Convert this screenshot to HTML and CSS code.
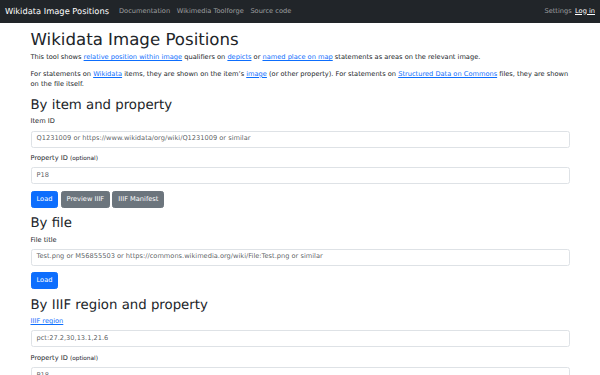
FILE: index.html
```html
<!DOCTYPE html>
<html lang="en">
<head>
    <meta charset="UTF-8">
    <meta name="viewport" content="width=device-width, initial-scale=1.0">
    <title>Wikidata Image Positions</title>
    <link rel="stylesheet" href="styles.css">
</head>
<body>
<!-- 顶部导航 -->
<nav class="navbar">
    <div class="navbar-left">
        <a class="brand" href="#">Wikidata Image Positions</a>
        <a class="nav-link" href="#">Documentation</a>
        <a class="nav-link" href="#">Wikimedia Toolforge</a>
        <a class="nav-link" href="#">Source code</a>
    </div>
    <div class="navbar-right">
        <a class="nav-link" href="#">Settings</a>
        <span class="navbar-text"><a href="#">Log in</a></span>
    </div>
</nav>

<main class="container">
    <h1>Wikidata Image Positions</h1>
    <p>
        This tool shows <a href="#">relative position within image</a> qualifiers on <a href="#">depicts</a> or <a href="#">named place on map</a> statements as areas on the relevant image.
    </p>
    <p>
        For statements on <a href="#">Wikidata</a> items, they are shown on the item’s <a href="#">image</a> (or other property). For statements on <a href="#">Structured Data on Commons</a> files, they are shown<br>
        on the file itself.
    </p>

    <!-- 按条目和属性 -->
    <form class="section">
        <h2>By item and property</h2>
        <div class="form-group">
            <label for="item-id" class="form-label">Item ID</label>
            <input type="text" id="item-id" class="form-control" placeholder="Q1231009 or https://www.wikidata/org/wiki/Q1231009 or similar">
        </div>
        <div class="form-group">
            <label for="property-id" class="form-label">Property ID <small>(optional)</small></label>
            <input type="text" id="property-id" class="form-control" placeholder="P18">
        </div>
        <div class="form-group">
            <button type="button" class="btn btn-primary">Load</button>
            <button type="button" class="btn btn-secondary">Preview IIIF</button>
            <button type="button" class="btn btn-secondary">IIIF Manifest</button>
        </div>
    </form>

    <!-- 按文件 -->
    <form class="section">
        <h2>By file</h2>
        <div class="form-group">
            <label for="file-title" class="form-label">File title</label>
            <input type="text" id="file-title" class="form-control" placeholder="Test.png or M56855503 or https://commons.wikimedia.org/wiki/File:Test.png or similar">
        </div>
        <div class="form-group">
            <button type="button" class="btn btn-primary">Load</button>
        </div>
    </form>

    <!-- 按 IIIF 区域和属性 -->
    <form class="section">
        <h2>By IIIF region and property</h2>
        <div class="form-group">
            <label for="iiif-region" class="form-label"><a href="#">IIIF region</a></label>
            <input type="text" id="iiif-region" class="form-control" placeholder="pct:27.2,30,13.1,21.6">
        </div>
        <div class="form-group">
            <label for="iiif-property-id" class="form-label">Property ID <small>(optional)</small></label>
            <input type="text" id="iiif-property-id" class="form-control" placeholder="P18">
        </div>
        <div class="form-group">
            <button type="button" class="btn btn-primary">Load</button>
        </div>
    </form>
</main>
</body>
</html>
```

FILE: styles.css
```css
*, *::before, *::after {
    box-sizing: border-box;
}
html {
    font-size: 6.65px;
    scrollbar-width: none;
}
::-webkit-scrollbar {
    display: none;
}
body {
    font-family: "DejaVu Sans", sans-serif;
    font-size: 1rem;
    line-height: 1.5;
    color: #212529;
    background-color: #fff;
    margin: 0;
    text-rendering: geometricPrecision;
}
a {
    color: #0d6efd;
}
.navbar {
    display: flex;
    justify-content: space-between;
    align-items: center;
    background-color: #212529;
    padding: 0.5rem 0.75rem;
}
.navbar-left, .navbar-right {
    display: flex;
    align-items: center;
}
.brand {
    color: #fff;
    font-size: 1.25rem;
    padding: 0.3125rem 0;
    margin-right: 1rem;
    text-decoration: none;
}
.nav-link {
    color: rgba(255, 255, 255, 0.55);
    padding: 0.5rem;
    text-decoration: none;
}
.navbar-text a {
    color: #fff;
}
.container {
    max-width: 549px;
    margin: 1rem auto 0;
    padding: 0 5px;
}
h1, h2 {
    font-weight: 400;
    line-height: 1.2;
    margin: 0 0 0.5rem;
}
h1 {
    font-size: 2.5rem;
}
h2 {
    font-size: 2rem;
    margin-top: 1.25rem;
}
p {
    margin: 0 0 1rem;
}
.form-group {
    margin-bottom: 1rem;
}
.form-label {
    display: inline-block;
    margin-bottom: 0.5rem;
}
small {
    font-size: 0.875em;
}
.form-control {
    display: block;
    width: 100%;
    padding: 0.375rem 0.75rem;
    font-family: inherit;
    font-size: 1rem;
    line-height: 1.5;
    color: #212529;
    border: 1px solid #dee2e6;
    border-radius: 0.375rem;
    text-rendering: inherit;
}
.form-control::placeholder {
    color: rgba(33, 37, 41, 0.75);
}
.btn {
    display: inline-block;
    padding: 0.375rem 0.75rem;
    font-family: inherit;
    font-size: 1rem;
    line-height: 1.5;
    color: #fff;
    border: 1px solid transparent;
    border-radius: 0.375rem;
    cursor: pointer;
    text-rendering: inherit;
}
.btn-primary {
    background-color: #0d6efd;
    border-color: #0d6efd;
}
.btn-secondary {
    background-color: #6c757d;
    border-color: #6c757d;
}
```
